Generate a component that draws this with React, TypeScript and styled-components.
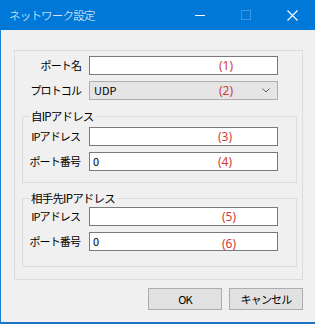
import React from "react";
import styled, { createGlobalStyle } from "styled-components";

const Global = createGlobalStyle`
  html, body { margin: 0; padding: 0; background: #f0f0f0; }
  body { font-family: "Noto Sans CJK JP", "Noto Sans", sans-serif; font-size: 11px; color: #000; font-weight: 400; }
  * { box-sizing: border-box; }
`;

const Window = styled.div`
  width: 315px;
  height: 324px;
  display: flex;
  flex-direction: column;
  border-left: 1px solid #1a82d4;
  border-bottom: 2px solid #1e74c0;
  background: #f0f0f0;
`;

const TitleBar = styled.div`
  height: 30px;
  flex: none;
  background: #0078d7;
  display: flex;
  align-items: center;
  color: #fff;
  margin-left: -1px;
`;

const Title = styled.div`
  flex: 1;
  padding-left: 9px;
  font-size: 11.5px;
  font-weight: 300;
  line-height: 30px;
  letter-spacing: -0.8px;
`;

const CaptionButton = styled.div<{ $dim?: boolean }>`
  width: 46px;
  height: 30px;
  display: flex;
  align-items: center;
  justify-content: center;
  color: ${(p) => (p.$dim ? "#3f98e2" : "#fff")};
`;

const Content = styled.div`
  flex: 1;
  padding: 20px 12px 0 13px;
  display: flex;
  flex-direction: column;
`;

const OuterGroup = styled.div`
  width: 289px;
  height: 230px;
  border: 1px solid #dcdcdc;
  padding: 5px 0 0 0;
  display: flex;
  flex-direction: column;
`;

const Rows = styled.div`
  display: flex;
  flex-direction: column;
  gap: 6px;
`;

const Row = styled.div`
  display: flex;
  align-items: center;
  height: 19px;
`;

const Label = styled.div<{ $w: number; $gapAfter: number }>`
  width: ${(p) => p.$w}px;
  margin-right: ${(p) => p.$gapAfter}px;
  text-align: right;
  white-space: nowrap;
  font-size: 11px;
  letter-spacing: -0.9px;
  line-height: 19px;
`;

const TextBox = styled.div`
  position: relative;
  width: 189px;
  height: 19px;
  background: #fff;
  border: 1px solid #7a7a7a;
  padding-left: 3px;
  font-size: 11px;
  line-height: 17px;
`;

const Select = styled.div`
  position: relative;
  width: 189px;
  height: 19px;
  background: #e5e5e5;
  border: 1px solid #adadad;
  padding-left: 4px;
  font-size: 11px;
  line-height: 17px;
  display: flex;
  align-items: center;
`;

const Chevron = styled.svg`
  position: absolute;
  right: 7px;
  top: 6px;
`;

const Note = styled.span<{ $x: number; $dy?: number }>`
  position: absolute;
  left: ${(p) => p.$x}px;
  top: ${(p) => 1 + (p.$dy ?? 0)}px;
  color: #d03a3a;
  font-size: 12px;
  line-height: 15px;
  font-weight: 400;
  font-family: "Noto Sans", "Noto Sans CJK JP", sans-serif;
`;

const Group = styled.div<{ $top: number; $padTop: number; $padBottom: number }>`
  position: relative;
  margin: ${(p) => p.$top}px 5px 0 7px;
  border: 1px solid #dcdcdc;
  padding: ${(p) => p.$padTop}px 0 ${(p) => p.$padBottom}px 0;
`;

const Legend = styled.div`
  position: absolute;
  top: -9px;
  left: 7px;
  padding: 0 2px 0 1px;
  background: #f0f0f0;
  font-size: 11.5px;
  letter-spacing: -0.8px;
  line-height: 16px;
  white-space: nowrap;
`;

const ButtonBar = styled.div`
  display: flex;
  justify-content: flex-end;
  gap: 7px;
  margin-top: 8px;
  width: 289px;
`;

const Button = styled.div`
  width: 74px;
  height: 22px;
  background: #e1e1e1;
  border: 1px solid #adadad;
  display: flex;
  align-items: center;
  justify-content: center;
  font-size: 11px;
  letter-spacing: -0.8px;
`;

export default function App() {
  return (
    <>
      <Global />
      <Window>
        <TitleBar>
          <Title>ネットワーク設定</Title>
          <CaptionButton>
            <svg width="10" height="10" viewBox="0 0 10 10">
              <line x1="0" y1="5.5" x2="10" y2="5.5" stroke="currentColor" strokeWidth="1" />
            </svg>
          </CaptionButton>
          <CaptionButton $dim>
            <svg width="10" height="10" viewBox="0 0 10 10">
              <rect x="0.5" y="0.5" width="9" height="9" fill="none" stroke="currentColor" strokeWidth="1" />
            </svg>
          </CaptionButton>
          <CaptionButton>
            <svg width="11" height="11" viewBox="0 0 11 11">
              <path d="M0.5 0.5 L10.5 10.5 M10.5 0.5 L0.5 10.5" stroke="currentColor" strokeWidth="1.1" fill="none" />
            </svg>
          </CaptionButton>
        </TitleBar>
        <Content>
          <OuterGroup>
            <Rows>
              <Row>
                <Label $w={66} $gapAfter={8}>ポート名</Label>
                <TextBox>
                  <Note $x={129}>(1)</Note>
                </TextBox>
              </Row>
              <Row>
                <Label $w={66} $gapAfter={8}>プロトコル</Label>
                <Select>
                  UDP
                  <Note $x={129}>(2)</Note>
                  <Chevron width="8" height="5" viewBox="0 0 8 5">
                    <path d="M0.5 0.5 L4 4 L7.5 0.5" stroke="#606060" strokeWidth="1" fill="none" />
                  </Chevron>
                </Select>
              </Row>
            </Rows>
            <Group $top={16} $padTop={10} $padBottom={11}>
              <Legend>自IPアドレス</Legend>
              <Rows>
                <Row>
                  <Label $w={57} $gapAfter={9}>IPアドレス</Label>
                  <TextBox>
                    <Note $x={128}>(3)</Note>
                  </TextBox>
                </Row>
                <Row>
                  <Label $w={57} $gapAfter={9}>ポート番号</Label>
                  <TextBox>
                    0
                    <Note $x={128}>(4)</Note>
                  </TextBox>
                </Row>
              </Rows>
            </Group>
            <Group $top={15} $padTop={8} $padBottom={15}>
              <Legend>相手先IPアドレス</Legend>
              <Rows>
                <Row>
                  <Label $w={57} $gapAfter={9}>IPアドレス</Label>
                  <TextBox>
                    <Note $x={132}>(5)</Note>
                  </TextBox>
                </Row>
                <Row>
                  <Label $w={57} $gapAfter={9}>ポート番号</Label>
                  <TextBox>
                    0
                    <Note $x={132} $dy={2}>(6)</Note>
                  </TextBox>
                </Row>
              </Rows>
            </Group>
          </OuterGroup>
          <ButtonBar>
            <Button>OK</Button>
            <Button>キャンセル</Button>
          </ButtonBar>
        </Content>
      </Window>
    </>
  );
}
